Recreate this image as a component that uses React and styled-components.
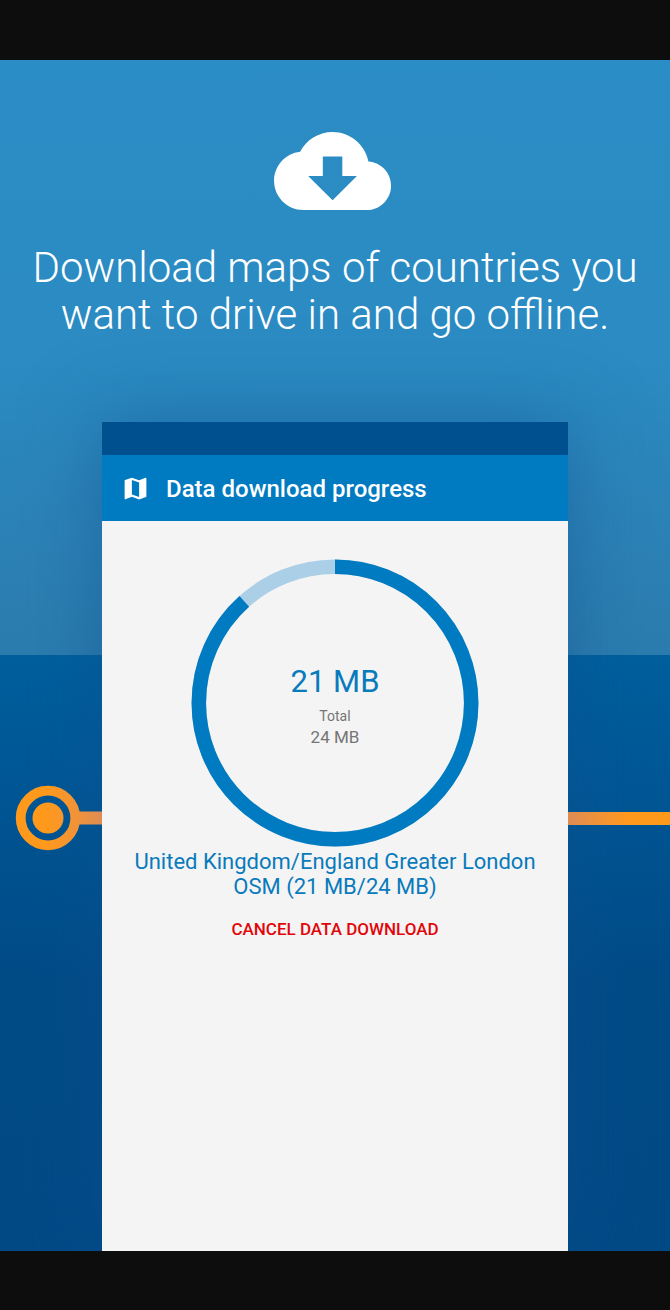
import React from "react";
import styled, { createGlobalStyle } from "styled-components";
import { MdMap } from "react-icons/md";

const GlobalStyle = createGlobalStyle`
  *, *::before, *::after { box-sizing: border-box; }
  body {
    margin: 0;
    background: #0d0d0d;
    font-family: Roboto, "Liberation Sans", sans-serif;
  }
`;

const Page = styled.div`
  display: flex;
  flex-direction: column;
  min-height: 100vh;
  padding: 60px 0 59px;
`;

const Poster = styled.main`
  flex: 1;
  display: flex;
  flex-direction: column;
  overflow: hidden;
  background: linear-gradient(
    #2b8dc5 0%,
    #2b8bc2 25%,
    #2c7cae 50%,
    #005f9e 50%,
    #004b87 77%,
    #004a86 100%
  );
`;

const Intro = styled.header`
  display: flex;
  flex-direction: column;
  align-items: center;
  gap: 34px;
  padding: 72px 24px 84px;
`;

const CloudIcon = styled.svg`
  display: block;
  width: 122px;
  height: 78px;
  fill: #fff;
`;

const Headline = styled.h1`
  margin: 0;
  max-width: 620px;
  color: #fff;
  font-size: 42px;
  font-weight: 300;
  line-height: 47px;
  text-align: center;
`;

const Stage = styled.section`
  flex: 1;
  display: grid;
  grid-template-columns: 102px minmax(0, 1fr) 102px;
`;

const Rail = styled.div`
  position: relative;
  z-index: 1;
  display: flex;
  align-items: center;
  height: 66px;
  margin-top: 363px;
  padding-left: ${(p) => (p.$inset ? "15px" : "0")};
`;

const Station = styled.svg`
  display: block;
  width: 87px;
  height: 66px;
`;

const Track = styled.div`
  flex: 1;
  height: 13px;
  background: linear-gradient(to right, #de8c54, #ff991c 60%);
`;

const Phone = styled.article`
  display: flex;
  flex-direction: column;
  background: #f4f4f4;
  box-shadow: 0 0 72px rgba(16, 80, 144, 0.5);
`;

const StatusBar = styled.div`
  height: 33px;
  background: #00508f;
`;

const Toolbar = styled.div`
  display: flex;
  align-items: center;
  gap: 16px;
  height: 66px;
  padding: 0 19px;
  background: #007ac0;
  color: #fff;
`;

const Title = styled.h2`
  margin: 0;
  padding-top: 2px;
  font-size: 24px;
  font-weight: 500;
  line-height: 32px;
`;

const MapIcon = styled(MdMap)`
  width: 29px;
  height: 29px;
`;

const Content = styled.div`
  display: flex;
  flex-direction: column;
  align-items: center;
  padding: 38px 24px;
`;

const Gauge = styled.div`
  display: grid;
  width: 288px;
  height: 288px;

  > * {
    grid-area: 1 / 1;
  }
`;

const Ring = styled.svg`
  width: 100%;
  height: 100%;
  fill: none;
  stroke-width: 14.5;
`;

const Readout = styled.div`
  display: flex;
  flex-direction: column;
  align-items: center;
  justify-content: center;
  padding-top: 6px;
  color: #757575;
`;

const Loaded = styled.strong`
  margin-bottom: 6px;
  color: #097abb;
  font-size: 31px;
  font-weight: 400;
  line-height: 36px;
`;

const TotalLabel = styled.span`
  font-size: 14px;
  line-height: 20px;
`;

const TotalValue = styled.span`
  font-size: 17px;
  line-height: 22px;
`;

const FileName = styled.p`
  margin: 2px 0 6px;
  color: #097abb;
  font-size: 22px;
  line-height: 25px;
  text-align: center;
`;

const CancelButton = styled.button`
  height: 48px;
  padding: 0 16px;
  border: 0;
  background: none;
  color: #e2060a;
  font: 500 17px/24px Roboto, "Liberation Sans", sans-serif;
  text-transform: uppercase;
  cursor: pointer;
`;

function ProgressRing({ percent }) {
  return (
    <Ring viewBox="0 0 288 288" aria-hidden="true">
      <circle cx="144" cy="144" r="136.2" stroke="#abcfe6" />
      <circle
        cx="144"
        cy="144"
        r="136.2"
        stroke="#007ac0"
        pathLength="100"
        strokeDasharray={`${percent} 100`}
        transform="rotate(-90 144 144)"
      />
    </Ring>
  );
}

export default function App() {
  return (
    <>
      <GlobalStyle />
      <Page>
        <Poster>
          <Intro>
            <CloudIcon viewBox="0 4 25 16" aria-hidden="true">
              <path d="M19.35 10.04C18.67 6.59 15.64 4 12 4 9.11 4 6.6 5.64 5.35 8.04 2.34 8.36 0 10.91 0 14c0 3.31 2.69 6 6 6h13c2.76 0 5-2.24 5-5 0-2.64-2.05-4.78-4.65-4.96zM17 13l-5 5-5-5h3V9h4v4h3z" />
            </CloudIcon>
            <Headline>
              Download maps of countries you want to drive in and go offline.
            </Headline>
          </Intro>
          <Stage>
            <Rail $inset>
              <Station viewBox="0 0 87 66" aria-hidden="true">
                <defs>
                  <linearGradient id="rail" gradientUnits="userSpaceOnUse" x1="30" y1="0" x2="87" y2="0">
                    <stop offset="0" stopColor="#ff991c" />
                    <stop offset="0.4" stopColor="#f6952f" />
                    <stop offset="1" stopColor="#de8c54" />
                  </linearGradient>
                </defs>
                <rect x="62" y="26.5" width="25" height="13" fill="url(#rail)" />
                <circle cx="33" cy="33" r="27.3" fill="none" stroke="url(#rail)" strokeWidth="9.8" />
                <circle cx="33" cy="33" r="15.5" fill="url(#rail)" />
              </Station>
            </Rail>
            <Phone>
              <StatusBar />
              <Toolbar>
                <MapIcon aria-hidden="true" />
                <Title>Data download progress</Title>
              </Toolbar>
              <Content>
                <Gauge>
                  <ProgressRing percent={88.4} />
                  <Readout>
                    <Loaded>21 MB</Loaded>
                    <TotalLabel>Total</TotalLabel>
                    <TotalValue>24 MB</TotalValue>
                  </Readout>
                </Gauge>
                <FileName>
                  United Kingdom/England Greater London OSM (21 MB/24 MB)
                </FileName>
                <CancelButton type="button">Cancel data download</CancelButton>
              </Content>
            </Phone>
            <Rail>
              <Track />
            </Rail>
          </Stage>
        </Poster>
      </Page>
    </>
  );
}
